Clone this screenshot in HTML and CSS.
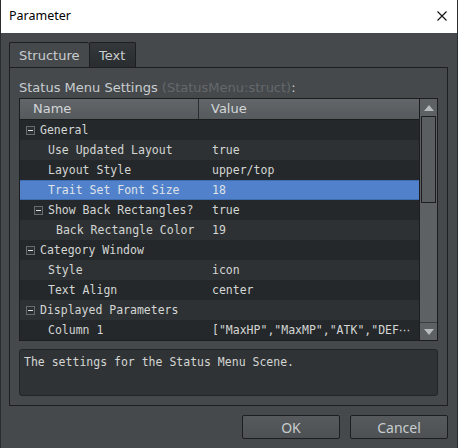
FILE: index.html
```html
<!DOCTYPE html>
<html lang="en">
<head>
    <meta charset="UTF-8">
    <title>Parameter</title>
    <link rel="stylesheet" href="styles.css">
</head>
<body>
    <div class="dialog">
        <div class="titlebar">
            <span class="title">Parameter</span>
            <svg class="close" width="10" height="10" viewBox="0 0 10 10">
                <path d="M0.5 0.5 L9.5 9.5 M9.5 0.5 L0.5 9.5" stroke="#111" stroke-width="1.1" fill="none"/>
            </svg>
        </div>

        <div class="content">
            <div class="tabs">
                <div class="tab active">Structure</div>
                <div class="tab">Text</div>
            </div>

            <div class="panel">
                <div class="caption">Status Menu Settings <span class="type">(StatusMenu:struct)</span>:</div>

                <div class="tree">
                    <div class="tree-body">
                        <div class="tree-head">
                            <div class="head-name">Name</div>
                            <div class="head-value">Value</div>
                        </div>

                        <div class="row">
                            <div class="name lv0"><span class="toggle"></span>General</div>
                            <div class="value"></div>
                        </div>
                        <div class="row alt">
                            <div class="name lv1">Use Updated Layout</div>
                            <div class="value">true</div>
                        </div>
                        <div class="row">
                            <div class="name lv1">Layout Style</div>
                            <div class="value">upper/top</div>
                        </div>
                        <div class="row selected">
                            <div class="name lv1">Trait Set Font Size</div>
                            <div class="value">18</div>
                        </div>
                        <div class="row">
                            <div class="name lv1b"><span class="toggle"></span>Show Back Rectangles?</div>
                            <div class="value">true</div>
                        </div>
                        <div class="row alt">
                            <div class="name lv2">Back Rectangle Color</div>
                            <div class="value">19</div>
                        </div>
                        <div class="row">
                            <div class="name lv0"><span class="toggle"></span>Category Window</div>
                            <div class="value"></div>
                        </div>
                        <div class="row alt">
                            <div class="name lv1">Style</div>
                            <div class="value">icon</div>
                        </div>
                        <div class="row">
                            <div class="name lv1">Text Align</div>
                            <div class="value">center</div>
                        </div>
                        <div class="row alt">
                            <div class="name lv0"><span class="toggle"></span>Displayed Parameters</div>
                            <div class="value"></div>
                        </div>
                        <div class="row">
                            <div class="name lv1">Column 1</div>
                            <div class="value">["MaxHP","MaxMP","ATK","DEF<span class="more">⋯</span></div>
                        </div>
                    </div>

                    <div class="scrollbar">
                        <div class="sb-btn"><span class="arrow up"></span></div>
                        <div class="sb-thumb"></div>
                        <div class="sb-track"></div>
                        <div class="sb-btn"><span class="arrow down"></span></div>
                    </div>
                </div>

                <div class="help">The settings for the Status Menu Scene.</div>
            </div>

            <div class="buttons">
                <button class="btn">OK</button>
                <button class="btn">Cancel</button>
            </div>
        </div>
    </div>
</body>
</html>
```

FILE: styles.css
```css
body {
    margin: 0;
    background-color: #45494c;
}

.dialog {
    width: 458px;
    height: 448px;
    box-sizing: border-box;
    border-left: 1px solid #2a2d30;
    border-right: 1px solid #2a2d30;
    background-color: #45494c;
    display: flex;
    flex-direction: column;
    overflow: hidden;
}

.titlebar {
    height: 31px;
    flex-shrink: 0;
    background-color: #fff;
    display: flex;
    align-items: center;
    justify-content: space-between;
    padding: 0 10px 2px 8px;
}

.title {
    font-family: "Noto Sans", sans-serif;
    font-size: 12.5px;
    color: #000;
}

.close {
    display: block;
}

.content {
    padding: 9px 9px 0 8px;
    display: flex;
    flex-direction: column;
}

/* tab strip */
.tabs {
    display: flex;
    height: 25px;
}

.tab {
    box-sizing: border-box;
    height: 25px;
    padding: 0 0 0 9px;
    border: 1px solid #1c1e20;
    border-bottom: none;
    border-radius: 2px 2px 0 0;
    font-family: "DejaVu Sans", sans-serif;
    font-size: 13px;
    line-height: 25px;
    color: #c9cdcf;
    background: linear-gradient(#35383b, #2a2d30);
}

.tab.active {
    width: 80px;
    background: #45494c;
    border-right: none;
}

.tab + .tab {
    width: 47px;
}

/* main group panel */
.panel {
    border: 1px solid #1c1e20;
    padding: 12px 9px 9px 9px;
    display: flex;
    flex-direction: column;
}

.caption {
    font-family: "DejaVu Sans", sans-serif;
    font-size: 13px;
    line-height: 16px;
    color: #c9cdcf;
    margin-bottom: 2px;
}

.caption .type {
    color: #64686b;
}

/* property tree */
.tree {
    display: flex;
    border: 1px solid #1b1d1f;
    background-color: #25282b;
}

.tree-body {
    width: 401px;
}

.tree-head {
    display: flex;
    height: 20px;
    background: linear-gradient(#62666a, #555a5d);
    border-bottom: 1px solid #1b1d1f;
    font-family: "DejaVu Sans", sans-serif;
    font-size: 13px;
    line-height: 20px;
    color: #d2d5d7;
}

.head-name {
    width: 179px;
    padding-left: 13px;
    box-sizing: border-box;
    border-right: 1px solid #2a2d30;
}

.head-value {
    padding-left: 12px;
}

.row {
    display: flex;
    height: 20px;
    font-family: "DejaVu Sans Mono", monospace;
    font-size: 11.5px;
    line-height: 20px;
    color: #d3d6d3;
    white-space: nowrap;
    background-color: #25282b;
}

.row.alt {
    background-color: #2e3134;
}

.row.selected {
    background-color: #5281cb;
    box-shadow: inset 0 1px 0 #3f6cae, inset 0 -1px 0 #3f6cae;
    color: #dfe3e8;
}

.name {
    width: 180px;
    flex-shrink: 0;
    box-sizing: border-box;
    display: flex;
    align-items: center;
}

.name.lv0 { padding-left: 6px; }
.name.lv1 { padding-left: 28px; }
.name.lv1b { padding-left: 14px; }
.name.lv2 { padding-left: 36px; }

/* collapse box in front of a group */
.toggle {
    width: 9px;
    height: 9px;
    box-sizing: border-box;
    margin-right: 5px;
    background-color: #2c2f32;
    border: 1px solid #676b6e;
    position: relative;
}

.toggle::after {
    content: "";
    position: absolute;
    left: 1px;
    right: 1px;
    top: 3px;
    height: 1px;
    background-color: #dcdfe0;
}

.value {
    flex: 1;
    min-width: 0;
    padding-left: 12px;
    overflow: hidden;
}

.more {
    font-family: "DejaVu Sans", sans-serif;
}

/* vertical scrollbar */
.scrollbar {
    width: 17px;
    display: flex;
    flex-direction: column;
    background-color: #5d6164;
    border-left: 1px solid #1b1d1f;
}

.sb-btn {
    height: 17px;
    display: flex;
    align-items: center;
    justify-content: center;
}

.arrow {
    width: 0;
    height: 0;
    border-left: 5px solid transparent;
    border-right: 5px solid transparent;
}

.arrow.up {
    border-bottom: 6px solid #b8bcbe;
}

.arrow.down {
    border-top: 6px solid #b8bcbe;
}

.sb-thumb {
    height: 87px;
    margin: 0 1px;
    box-sizing: border-box;
    border: 1px solid #1b1d1f;
    background-color: #5a5e61;
}

.sb-track {
    flex: 1;
    border-bottom: 1px solid #3a3d40;
}

/* description area */
.help {
    margin-top: 8px;
    height: 47px;
    box-sizing: border-box;
    padding: 5px 4px;
    border: 1px solid #222528;
    border-radius: 3px;
    background-color: #303336;
    font-family: "DejaVu Sans Mono", monospace;
    font-size: 11.5px;
    line-height: 14px;
    color: #d3d6d3;
}

/* dialog buttons */
.buttons {
    display: flex;
    justify-content: flex-end;
    gap: 10px;
    margin-top: 9px;
}

.btn {
    width: 98px;
    height: 24px;
    padding: 0;
    border: 1px solid #1c1e20;
    border-radius: 2px;
    background: linear-gradient(#565a5d, #4d5154);
    font-family: "Noto Sans", sans-serif;
    font-size: 14px;
    color: #c9cdcf;
}
```
